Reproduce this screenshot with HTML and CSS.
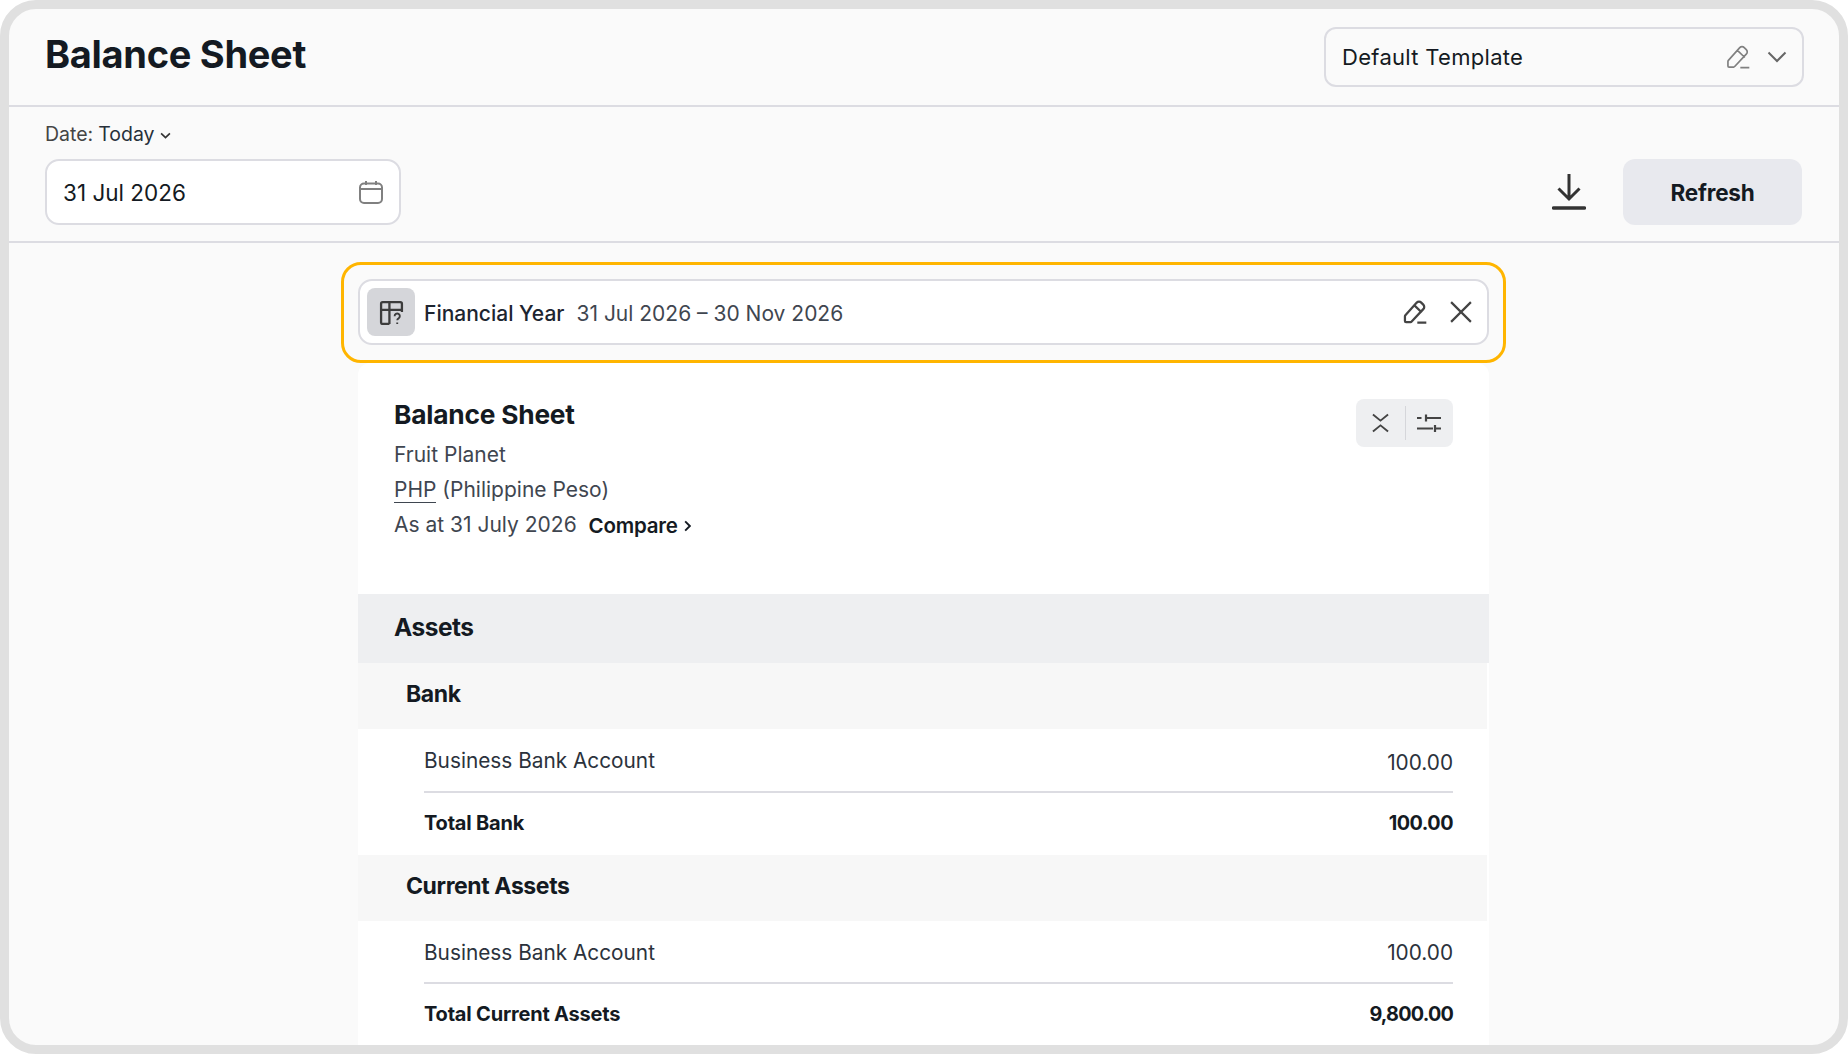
FILE: index.html
```html
<!DOCTYPE html>
<html lang="en">
<head>
<meta charset="utf-8">
<title>Balance Sheet</title>
<link rel="stylesheet" href="styles.css">
</head>
<body>
<div class="frame">
  <header class="top">
    <h1 class="title">Balance Sheet</h1>
    <div class="template">
      <span class="template-name">Default Template</span>
      <svg class="ic-pen-sm" viewBox="0 0 24 24"><path d="M14 3.200a2.800 2.800 0 0 1 4 0l1.800 1.800a2.800 2.800 0 0 1 0 4L9.500 20a1.500 1.500 0 0 1-1 .5h-4a1 1 0 0 1-1-1v-4a1.500 1.500 0 0 1 .4-1L14 3.200ZM11.700 5.500l6.800 6.500M14.500 21h8"/></svg>
      <svg class="ic-chev" viewBox="0 0 20 12"><path d="M1.500 1.500 10 10l8.500-8.500"/></svg>
    </div>
  </header>
  <section class="filters">
    <div class="date-col">
      <div class="date-label"><span class="date-key">Date:</span> Today <svg class="ic-chev-sm" viewBox="0 0 10 6"><path d="M1 1l4 4 4-4"/></svg></div>
      <div class="date-field">
        <span>31 Jul 2026</span>
        <svg class="ic-cal" viewBox="0 0 24 24"><rect x="1" y="3.500" width="22" height="19.500" rx="4"/><path d="M1 9h22M7 1v4M17 1v4"/></svg>
      </div>
    </div>
    <div class="actions">
      <svg class="ic-dl" viewBox="0 0 34 36"><path class="thin" d="M17 0v25M6.500 14.500 17 25l10.500-10.500"/><path class="thick" d="M1.500 34h31"/></svg>
      <button class="refresh">Refresh</button>
    </div>
  </section>
  <main class="canvas">
    <div class="highlight">
      <div class="period">
        <span class="period-icon">
          <svg viewBox="0 0 24 24"><path d="M10 23H3.500A1.500 1.500 0 0 1 2 21.500v-18A1.500 1.500 0 0 1 3.500 2h17A1.500 1.500 0 0 1 22 3.500v8M2 9.500h20M10 2v21"/><path class="q" d="M15 15.500a2.500 2.500 0 1 1 3.800 2.100c-.9.500-1.300 1-1.300 1.800M17.500 21.500v1.500"/></svg>
        </span>
        <span class="period-name">Financial Year</span>
        <span class="period-range">31 Jul 2026 – 30 Nov 2026</span>
        <svg class="ic-pen" viewBox="0 0 24 24"><path d="M14 3.200a2.800 2.800 0 0 1 4 0l1.800 1.800a2.800 2.800 0 0 1 0 4L9.500 20a1.500 1.500 0 0 1-1 .5h-4a1 1 0 0 1-1-1v-4a1.500 1.500 0 0 1 .4-1L14 3.200ZM11.700 5.500l6.800 6.500M14.500 21h8"/></svg>
        <svg class="ic-x" viewBox="0 0 20 20"><path d="M1 1l18 18M19 1 1 19"/></svg>
      </div>
    </div>
    <article class="report">
      <div class="report-head">
        <div class="report-meta">
          <h2 class="report-title">Balance Sheet</h2>
          <p class="meta-line">Fruit Planet</p>
          <p class="meta-line"><span class="cur">PHP</span> (Philippine Peso)</p>
          <p class="meta-line">As at 31 July 2026 <span class="compare">Compare <svg class="ic-more" viewBox="0 0 6 10"><path d="M1 1l4 4-4 4"/></svg></span></p>
        </div>
        <div class="tools">
          <svg class="ic-collapse" viewBox="0 0 18 20"><path d="M1 1l8 6.500 8-6.500M1 19l8-6.500 8 6.500"/></svg>
          <span class="tools-sep"></span>
          <svg class="ic-sliders" viewBox="0 0 24 18"><path d="M0 4h4.500M9 4h15M9 .5v7M0 14.500h16M18 14.500h6M18 11v7"/></svg>
        </div>
      </div>
      <div class="sec">Assets</div>
      <div class="group">Bank</div>
      <div class="row"><span>Business Bank Account</span><span class="amt">100.00</span></div>
      <div class="row total"><span>Total Bank</span><span class="amt">100.00</span></div>
      <div class="group">Current Assets</div>
      <div class="row row-short"><span>Business Bank Account</span><span>100.00</span></div>
      <div class="row total"><span>Total Current Assets</span><span class="amt amt-wide">9,800.00</span></div>
    </article>
  </main>
</div>
</body>
</html>
```
FILE: styles.css
```css
* { box-sizing: border-box; }
html, body { margin: 0; padding: 0; background: #fff; }
body { font-family: Inter, "Liberation Sans", sans-serif; color: #141a22; }
svg { display: block; fill: none; flex: none; }
.frame { width: 1848px; height: 1054px; border: 9px solid #e0e0e0; border-radius: 36px; background: #fafafa; overflow: hidden; display: flex; flex-direction: column; }
.top { height: 98px; flex: none; display: flex; justify-content: space-between; align-items: flex-start; padding: 18px 35px 0 36px; border-bottom: 2px solid #dcdce2; }
.title { margin: 5px 0 0; font-size: 38px; line-height: 44px; font-weight: 700; letter-spacing: -.3px; }
.template { width: 480px; height: 60px; border: 2px solid #dcdce2; border-radius: 12px; display: flex; align-items: center; padding: 0 15px 0 16px; font-size: 22px; letter-spacing: .3px; }
.template-name { flex: 1; }
.ic-pen-sm { width: 27px; height: 27px; stroke: #808080; stroke-width: 1.500; margin-right: 16px; }
.ic-chev { width: 20px; height: 12px; stroke: #666; stroke-width: 2; }
.filters { height: 136px; flex: none; display: flex; justify-content: space-between; border-bottom: 2px solid #dcdce2; padding: 14px 37px 0 36px; }
.date-label { font-size: 19.500px; line-height: 26px; display: flex; align-items: center; gap: 5px; color: #27303a; }
.date-key { color: #444; }
.ic-chev-sm { width: 11px; height: 7px; stroke: #333; stroke-width: 1.500; margin-top: 2px; }
.date-field { width: 356px; height: 66px; margin-top: 12px; border: 2px solid #dcdce2; border-radius: 14px; background: #fff; display: flex; justify-content: space-between; align-items: center; padding: 0 16px; font-size: 22.500px; }
.ic-cal { width: 24px; height: 24px; stroke: #808080; stroke-width: 2; }
.actions { display: flex; align-items: flex-end; gap: 37px; padding-bottom: 16px; }
.ic-dl { width: 34px; height: 36px; margin-bottom: 15px; }
.ic-dl .thin { stroke: #333; stroke-width: 3; }
.ic-dl .thick { stroke: #333; stroke-width: 3.500; stroke-linecap: round; }
.refresh { width: 179px; height: 66px; border: 0; border-radius: 12px; background: #e8e9ee; color: #141a22; font: 700 22.500px Inter, sans-serif; letter-spacing: -.2px; }
.canvas { flex: 1; min-height: 0; display: flex; flex-direction: column; align-items: center; padding: 19px 1px 0 0; }
.highlight { width: 1165px; height: 101px; flex: none; border: 3px solid #ffb500; border-radius: 20px; padding: 14px; }
.period { height: 66px; border: 2px solid #dcdce2; border-radius: 14px; background: #fff; display: flex; align-items: center; padding: 0 15px 0 7px; font-size: 21px; }
.period-icon { width: 48px; height: 48px; border-radius: 8px; background: #d5d6da; display: flex; align-items: center; justify-content: center; }
.period-icon svg { width: 25px; height: 25px; stroke: #3c3c3c; stroke-width: 2.200; }
.period-icon .q { stroke-width: 1.800; }
.period-name { margin-left: 9px; color: #1d2530; font-weight: 500; position: relative; top: 1px; }
.period-range { margin-left: 12px; flex: 1; color: #3f4650; position: relative; top: 1px; }
.ic-pen { width: 27px; height: 27px; stroke: #444; stroke-width: 2; margin-right: 22px; }
.ic-x { width: 22px; height: 22px; stroke: #444; stroke-width: 2; }
.report { width: 1131px; flex: 1; min-height: 0; background: #fff; border-radius: 12px 12px 0 0; }
.report-head { height: 231px; display: flex; justify-content: space-between; align-items: flex-start; padding: 36px 36px 0 36px; }
.report-title { margin: 0 0 6px; font-size: 26.300px; line-height: 32px; font-weight: 700; letter-spacing: -.2px; }
.meta-line { margin: 0; font-size: 21px; line-height: 35px; color: #3f4650; }
.cur { border-bottom: 1.500px solid #3f4650; }
.compare { margin-left: 6px; color: #141a22; font-size: 20.500px; font-weight: 600; display: inline-flex; align-items: center; gap: 6px; letter-spacing: -.2px; position: relative; top: 1px; }
.ic-more { width: 7px; height: 12px; stroke: #141a22; stroke-width: 1.600; }
.tools { width: 97px; height: 48px; background: #eeeff1; border-radius: 8px; display: flex; align-items: center; padding-left: 16px; }
.ic-collapse { width: 17px; height: 20px; stroke: #444; stroke-width: 2; }
.tools-sep { width: 1px; height: 34px; background: #d5d6da; margin: 0 11px 0 16px; }
.ic-sliders { width: 24px; height: 18px; stroke: #444; stroke-width: 2.200; }
.sec { height: 69px; display: flex; align-items: center; padding: 0 0 4px 36px; background: #eeeff1; font-size: 24.500px; font-weight: 700; letter-spacing: -.5px; }
.group { height: 66px; width: 1129px; display: flex; align-items: center; padding: 0 0 4px 48px; background: #f7f7f7; font-size: 23px; font-weight: 700; letter-spacing: -.4px; }
.row { margin: 0 36px 0 66px; height: 64px; display: flex; justify-content: space-between; align-items: center; font-size: 20.800px; color: #2b323c; border-bottom: 2px solid #dcdce2; }
.row-short { height: 63px; padding-top: 2px; }
.amt { position: relative; top: 2px; }
.row.total { height: 62px; padding-bottom: 2px; border-bottom: 0; font-size: 20px; font-weight: 700; color: #141a22; letter-spacing: -.2px; }
.row.total .amt { top: 0; font-size: 19.800px; letter-spacing: -.5px; }
.row.total .amt-wide { letter-spacing: -.8px; }
```
